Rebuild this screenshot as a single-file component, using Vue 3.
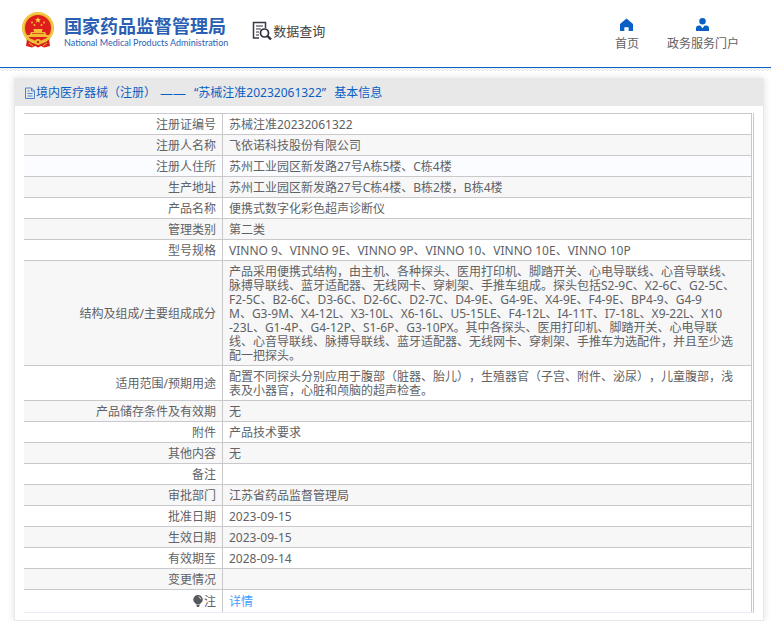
<script setup>
const rows = [
  { label: '注册证编号', value: '苏械注准20232061322' },
  { label: '注册人名称', value: '飞依诺科技股份有限公司' },
  { label: '注册人住所', value: '苏州工业园区新发路27号A栋5楼、C栋4楼' },
  { label: '生产地址', value: '苏州工业园区新发路27号C栋4楼、B栋2楼，B栋4楼' },
  { label: '产品名称', value: '便携式数字化彩色超声诊断仪' },
  { label: '管理类别', value: '第二类' },
  { label: '型号规格', value: 'VINNO 9、VINNO 9E、VINNO 9P、VINNO 10、VINNO 10E、VINNO 10P' },
  {
    label: '结构及组成/主要组成成分',
    value: [
      '产品采用便携式结构，由主机、各种探头、医用打印机、脚踏开关、心电导联线、心音导联线、',
      '脉搏导联线、蓝牙适配器、无线网卡、穿刺架、手推车组成。探头包括S2-9C、X2-6C、G2-5C、',
      'F2-5C、B2-6C、D3-6C、D2-6C、D2-7C、D4-9E、G4-9E、X4-9E、F4-9E、BP4-9、G4-9',
      'M、G3-9M、X4-12L、X3-10L、X6-16L、U5-15LE、F4-12L、I4-11T、I7-18L、X9-22L、X10',
      '-23L、G1-4P、G4-12P、S1-6P、G3-10PX。其中各探头、医用打印机、脚踏开关、心电导联',
      '线、心音导联线、脉搏导联线、蓝牙适配器、无线网卡、穿刺架、手推车为选配件，并且至少选',
      '配一把探头。'
    ].join('\n')
  },
  {
    label: '适用范围/预期用途',
    value: '配置不同探头分别应用于腹部（脏器、胎儿），生殖器官（子宫、附件、泌尿），儿童腹部，浅\n表及小器官，心脏和颅脑的超声检查。'
  },
  { label: '产品储存条件及有效期', value: '无' },
  { label: '附件', value: '产品技术要求' },
  { label: '其他内容', value: '无' },
  { label: '备注', value: '' },
  { label: '审批部门', value: '江苏省药品监督管理局' },
  { label: '批准日期', value: '2023-09-15' },
  { label: '生效日期', value: '2023-09-15' },
  { label: '有效期至', value: '2028-09-14' },
  { label: '变更情况', value: '' }
]
</script>

<template>
  <div class="page">
    <header class="header">
      <a class="brand" href="#">
        <svg class="emblem" viewBox="0 0 34 36" aria-hidden="true">
          <path d="M6 27h22l1 7-6 1.500-3-1.500-3 1.500-3-1.500-3 1.500-6-1.500z" fill="#d9201c" />
          <circle cx="17" cy="16" r="16" fill="#e9b92e" />
          <circle cx="17" cy="16" r="15" fill="none" stroke="#f6d75a" stroke-width="1" />
          <circle cx="17" cy="16" r="13" fill="#df1d1c" />
          <path d="M17 5l.9 2 2.100.2-1.600 1.400.5 2.200-1.900-1.200-1.900 1.200.5-2.200L14 7.200l2.100-.2z" fill="#f5cf3d" />
          <g fill="#f0bd35">
            <circle cx="11" cy="10.500" r="1" />
            <circle cx="23" cy="10.500" r="1" />
            <circle cx="13.500" cy="13" r="1" />
            <circle cx="20.500" cy="13" r="1" />
            <path d="M13 17h8l1 1.500h-1V20h3l1 2v1h3v2H6v-2h3v-1l1-2h3v-1.500h-1z" />
          </g>
          <path d="M11 21.500h12" stroke="#d9201c" stroke-width=".7" />
          <path d="M5 27c4 0 7 1 9 3M29 27c-4 0-7 1-9 3" fill="none" stroke="#e9b92e" stroke-width="1.500" />
          <circle cx="17" cy="30" r="3" fill="#f0bd35" />
          <circle cx="17" cy="30" r="1.200" fill="#d9201c" />
          <path d="M8 31l4 3M26 31l-4 3" stroke="#f0bd35" stroke-width="1" />
        </svg>
        <span class="brand-text">
          <strong class="brand-name">国家药品监督管理局</strong>
          <span class="brand-en">National Medical Products Administration</span>
        </span>
      </a>
      <div class="section">
        <svg class="section-icon" viewBox="0 0 20 20" aria-hidden="true">
          <path d="M7 17H1.500V1.500h12V7" fill="none" stroke="#3b3948" stroke-width="1.500" />
          <path d="M4 5h7M4 8h5M4 11h3M4 14h3" stroke="#77757f" stroke-width="1.300" />
          <circle cx="12.500" cy="12" r="4" fill="#fff" stroke="#2f2d3c" stroke-width="1.700" />
          <path d="M15.500 15l3.500 3.500" stroke="#2f2d3c" stroke-width="2.400" />
        </svg>
        <span>数据查询</span>
      </div>
      <nav class="nav">
        <a href="#" class="nav-item">
          <svg viewBox="0 0 12 12" aria-hidden="true">
            <path d="M6 .5L0 5.500V12h4V8.500h4V12h4V5.500z" fill="#0a5fc4" />
          </svg>
          <span>首页</span>
        </a>
        <a href="#" class="nav-item">
          <svg viewBox="0 0 12 12" aria-hidden="true">
            <circle cx="6" cy="3" r="3" fill="#0a5fc4" />
            <path d="M0 12V9.500Q0 7 3 7h1l2 2.500L8 7h1q3 0 3 2.500V12z" fill="#0a5fc4" />
          </svg>
          <span>政务服务门户</span>
        </a>
      </nav>
    </header>
    <div class="hatch"></div>

    <main class="panel">
      <h1 class="panel-title">
        <svg viewBox="0 0 12 12" aria-hidden="true">
          <path d="M1.500 1h6l3 3v7.500h-9zM7.500 1v3h3M3.500 4h2M3.500 6.500h5M3.500 9h5" fill="none" stroke="#4a86d0" stroke-width="1" />
        </svg>
        <span class="title-part">境内医疗器械（注册）</span>
        <span class="dash">——</span>
        <span class="title-part">“苏械注准20232061322”</span>
        <span>基本信息</span>
      </h1>
      <div class="panel-body">
        <table class="info">
          <tbody>
            <tr v-for="row in rows" :key="row.label">
              <th scope="row">{{ row.label }}</th>
              <td>{{ row.value }}</td>
            </tr>
            <tr class="note">
              <th scope="row">
                <svg viewBox="0 0 10 12" aria-hidden="true">
                  <path d="M5 0a4.500 4.500 0 0 1 3 8L6.500 9.500h-3L2 8a4.500 4.500 0 0 1 3-8zM3.500 10h3v1l-.8 1H4.300l-.8-1z" fill="#55585d" />
                  <path d="M5.500 1.800Q7.500 2 7.700 4.200" fill="none" stroke="#fff" stroke-width=".8" />
                </svg>注
              </th>
              <td><a href="#">详情</a></td>
            </tr>
          </tbody>
        </table>
      </div>
    </main>
  </div>
</template>

<style>
body {
  margin: 0;
  background: #fff;
}
</style>

<style scoped>
.page {
  font-family: "Noto Sans", "Noto Sans CJK SC", sans-serif;
  font-size: 12px;
  line-height: 14px;
  color: #606266;
  text-spacing-trim: space-all;
}
a {
  color: inherit;
  text-decoration: none;
}
.header {
  display: flex;
  align-items: flex-start;
  height: 67px;
  padding: 0 32px 0 21px;
  border-bottom: 1px solid #0a5fc4;
}
.hatch {
  height: 3px;
  background: repeating-conic-gradient(#e6e6e6 0 25%, #fff 0 50%) 0 0 / 4px 2px;
}
.brand {
  display: flex;
  gap: 9px;
  padding-top: 12px;
  color: #2b5fb3;
}
.emblem {
  width: 34px;
  height: 36px;
}
.brand-text {
  display: flex;
  flex-direction: column;
  padding-top: 2px;
}
.brand-name {
  font-family: "Noto Sans CJK SC", sans-serif;
  font-size: 18px;
  line-height: 22px;
}
.brand-en {
  font-family: Lato, sans-serif;
  font-size: 9px;
  line-height: 14px;
  white-space: nowrap;
}
.section {
  display: flex;
  align-items: center;
  gap: 1px;
  padding: 21px 0 0 24px;
  font-size: 13px;
  line-height: 18px;
  color: #444;
}
.section-icon {
  width: 20px;
  height: 20px;
}
.nav {
  display: flex;
  gap: 28px;
  margin-left: auto;
  padding-top: 18px;
}
.nav-item {
  display: flex;
  flex-direction: column;
  align-items: center;
  gap: 6px;
}
.nav-item svg {
  width: 13px;
  height: 13px;
}
.panel {
  margin: 7px 7px 0 14px;
  border: 1px solid #e8e8e8;
  border-top: 0;
  box-shadow: 0 0 8px rgba(0, 0, 0, 0.12);
}
.panel-title {
  display: flex;
  align-items: center;
  margin: 0;
  padding: 8px 9px 6px;
  background: #e8e8e8;
  color: #0a5fc4;
  font-size: 12px;
  font-weight: 400;
  line-height: 14px;
}
.panel-title svg {
  width: 12px;
  height: 12px;
}
.title-part {
  margin-right: 8px;
}
.dash {
  margin: 0 8px 0 -4px;
  font-size: 13px;
}
.panel-body {
  padding: 7px 9px;
}
.info {
  width: 100%;
  border-collapse: separate;
  border-spacing: 0;
  border-right: 1px solid #c8c8d0;
  border-bottom: 1px solid #ebeaf4;
  padding-right: 1px;
}
th,
td {
  padding: 4px 6px 2px;
  border-top: 1px solid #c9c9cb;
  border-right: 1px solid #c9c9cb;
  font-weight: 400;
  height: 14px;
}
th {
  width: 186px;
  text-align: right;
}
td {
  text-align: left;
  white-space: pre-line;
}
tr:nth-child(even) {
  background: #f7f7f7;
}
tr:nth-child(3) {
  background: #fafcff;
}
.note,
.note:nth-child(odd) {
  background: #fff;
}
.note th,
.note td {
  padding: 5px 6px 3px;
}
.note svg {
  width: 10px;
  height: 12px;
  vertical-align: -1px;
  margin-right: 1px;
}
.note a {
  color: #409eff;
}
</style>
